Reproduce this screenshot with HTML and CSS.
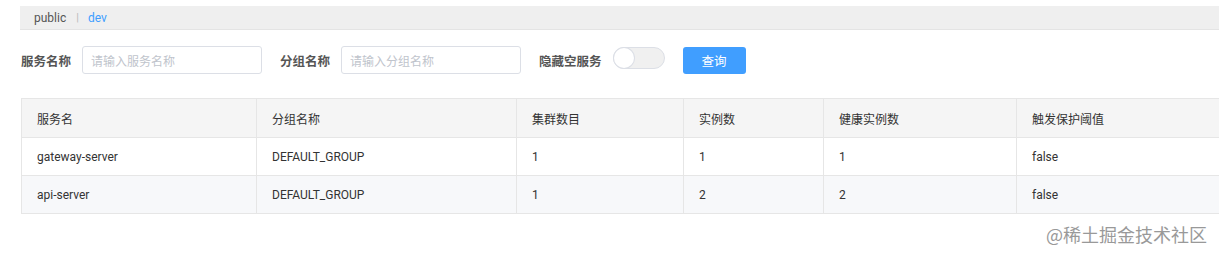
FILE: index.html
```html
<!DOCTYPE html>
<html lang="zh">
<head>
<meta charset="utf-8">
<link rel="stylesheet" href="styles.css">
</head>
<body>
<div class="page">
  <div class="ns-bar">
    <span class="ns">public</span><span class="sep">|</span><span class="ns active">dev</span>
  </div>
  <div class="filters">
    <label class="lbl">服务名称</label>
    <input class="inp" placeholder="请输入服务名称">
    <label class="lbl">分组名称</label>
    <input class="inp" placeholder="请输入分组名称">
    <label class="lbl">隐藏空服务</label>
    <span class="switch"><span class="knob"></span></span>
    <button class="btn">查询</button>
  </div>
  <div class="tbl-wrap">
  <table class="tbl">
    <thead>
      <tr><th class="c1">服务名</th><th class="c2">分组名称</th><th class="c3">集群数目</th><th class="c4">实例数</th><th class="c5">健康实例数</th><th class="c6">触发保护阈值</th></tr>
    </thead>
    <tbody>
      <tr><td>gateway-server</td><td>DEFAULT_GROUP</td><td>1</td><td>1</td><td>1</td><td>false</td></tr>
      <tr class="alt"><td>api-server</td><td>DEFAULT_GROUP</td><td>1</td><td>2</td><td>2</td><td>false</td></tr>
    </tbody>
  </table>
  </div>
  <div class="wm">@稀土掘金技术社区</div>
</div>
</body>
</html>
```
FILE: styles.css
```css
html, body { margin: 0; padding: 0; background: #fff; }
body { font-family: Roboto, "Noto Sans CJK SC", sans-serif; color: #333; width: 1219px; overflow: hidden; }
.page { position: relative; height: 255px; padding-top: 6px; box-sizing: border-box; overflow: hidden; }
.ns-bar { margin-left: 20px; height: 24px; background: #efefef; border-bottom: 1px solid #e4e4e4; box-sizing: border-box; display: flex; align-items: center; padding-left: 14px; font-size: 12px; }
.ns { color: #555; }
.ns.active { color: #409eff; }
.sep { color: #bbb; margin: 0 9px 0 10px; font-size: 11px; }
.filters { display: flex; align-items: center; margin: 16px 0 0 21px; height: 28px; }
.lbl { font-size: 12.5px; font-weight: bold; color: #555; margin-right: 11px; font-family: "Noto Sans CJK SC", sans-serif; }
.inp { width: 180px; height: 28px; box-sizing: border-box; border: 1px solid #dcdfe6; border-radius: 3px; padding: 0 8px; font-size: 12px; margin-right: 18px; font-family: "Noto Sans CJK SC", sans-serif; outline: none; }
.inp::placeholder { color: #c0c4cc; }
.switch { width: 52px; height: 22px; box-sizing: border-box; border: 1px solid #dcdfe6; border-radius: 11px; background: #f0f0f0; position: relative; margin-right: 18px; margin-top: -4px; }
.knob { position: absolute; left: 0; top: 0; width: 20px; height: 20px; border-radius: 50%; background: #fff; box-shadow: 0 0 0 1px #dcdfe6; }
.btn { width: 63px; height: 27px; border: none; border-radius: 3px; background: #409eff; color: #fff; font-size: 12.5px; font-family: "Noto Sans CJK SC", sans-serif; padding: 0; }
.tbl-wrap { margin: 24px 0 0 21px; width: 1240px; }
.tbl { border-collapse: collapse; width: 1230px; font-size: 12px; table-layout: fixed; }
.tbl th, .tbl td { border: 1px solid #e6e6e6; text-align: left; padding: 0 0 0 15px; height: 38px; box-sizing: border-box; font-weight: normal; }
.tbl th { background: #f5f5f5; color: #333; font-family: "Noto Sans CJK SC", sans-serif; height: 39px; }
.tbl td { color: #333; }
.tbl tr.alt td { background: #f7f8fa; }
.c1 { width: 235px; }
.c2 { width: 260px; }
.c3 { width: 167px; }
.c4 { width: 140px; }
.c5 { width: 193px; }
.wm { position: absolute; right: 12px; top: 221px; font-size: 18px; color: #999; font-family: "Noto Sans CJK SC", sans-serif; }
```
